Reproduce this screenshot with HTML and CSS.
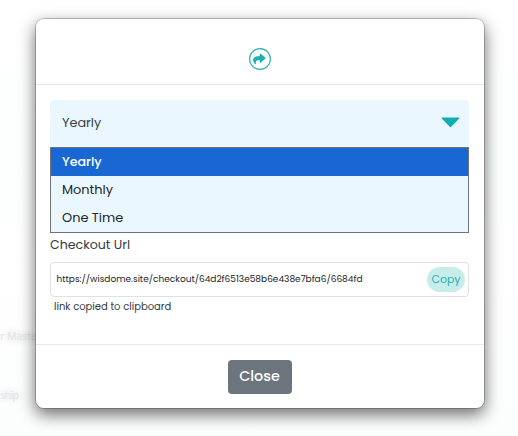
FILE: index.html
```html
<!DOCTYPE html>
<html lang="en">
    <head>
        <meta charset="utf-8">
        <title>Share checkout</title>
        <link rel="stylesheet" href="styles.css">
    </head>
    <body>
        <div class="backdrop">
            <span class="row-name first">r Maste</span>
            <span class="row-name second">ship</span>
        </div>

        <div class="modal">
            <div class="modal-header">
                <svg class="share-icon" width="22" height="22" viewBox="0 0 22 22">
                    <circle cx="11" cy="11" r="10.4" fill="none" stroke="#1fb0b5" stroke-width="1.1"/>
                    <path d="M10.8 5.8 Q11.2 5.4 11.8 5.8 L16.5 9.8 Q16.9 10.2 16.5 10.6 L11.8 14.6 Q11.2 15 10.8 14.4 V12.3 C7.6 12.2 6.3 13 7 15.8 Q6.9 16.3 6.3 16 C4.6 14.8 3.8 12.9 4.2 11.1 C4.8 8.7 7.3 8 10.8 7.9 Z" fill="#1fb0b5"/>
                </svg>
            </div>

            <div class="modal-body">
                <div class="select">
                    <span>Yearly</span>
                    <svg class="arrow" width="19" height="11" viewBox="0 0 19 11">
                        <path d="M0.8 0.5 H18.2 Q18.8 0.8 18.2 1.4 L10 10 Q9.5 10.5 9 10 L0.8 1.4 Q0.2 0.8 0.8 0.5 Z" fill="#12adb3"/>
                    </svg>
                    <ul class="options">
                        <li class="selected">Yearly</li>
                        <li>Monthly</li>
                        <li>One Time</li>
                    </ul>
                </div>

                <label class="url-label">Checkout Url</label>
                <div class="url-box">
                    <span class="url">https://wisdome.site/checkout/64d2f6513e58b6e438e7bfa6/6684fd</span>
                    <button class="copy">Copy</button>
                </div>
                <div class="hint">link copied to clipboard</div>
            </div>

            <div class="modal-footer">
                <button class="close">Close</button>
            </div>
        </div>
    </body>
</html>
```

FILE: styles.css
```css
* {
    box-sizing: border-box;
}

html, body {
    height: 100%;
}

body {
    margin: 0;
    padding: 18px 33px 0 35px;
    overflow: hidden;
    background: linear-gradient(#fff, #fdfefe 40%, #fff 60%, #fcfdfd);
    color: #212529;
    font-family: Poppins, Inter, "Open Sans", sans-serif;
    font-size: 13px;
}

button {
    border: 0;
    font-family: inherit;
}

.backdrop {
    position: absolute;
    inset: 0;
    color: #e2e3e6;
    font-family: "Open Sans", sans-serif;
    font-size: 10.5px;
}

.row-name {
    position: absolute;
    left: 0;
    line-height: 16px;
    text-shadow: 0 0 8px #c0c2ce;
}

.first {
    top: 328px;
}

.second {
    top: 387px;
    letter-spacing: -0.5px;
}

.modal {
    position: relative;
    height: 391px;
    background: #fff;
    border: 1px solid rgba(0, 0, 0, 0.2);
    border-radius: 9px;
    background-clip: padding-box;
    box-shadow: 0 6px 16px rgba(0, 0, 0, 0.55);
}

.modal-header {
    height: 66px;
    padding-top: 29px;
    text-align: center;
    border-bottom: 1px solid #e6e9ec;
}

.share-icon {
    display: block;
    margin: 0 auto;
}

.modal-body {
    height: 259px;
    padding: 15px 15px 0 14px;
}

.select {
    position: relative;
    display: flex;
    align-items: center;
    justify-content: space-between;
    height: 47px;
    padding: 0 9px 2px 12px;
    background: #eaf7ff;
    border-radius: 4px;
    color: #3a4045;
    font-size: 12.8px;
}

.options {
    position: absolute;
    top: 47px;
    left: 0;
    right: 0;
    margin: 0;
    padding: 0;
    list-style: none;
    background: #eaf7ff;
    border: 1px solid #6f7377;
    color: #212529;
    font-size: 12.9px;
}

.options li {
    height: 28px;
    padding-left: 11px;
    line-height: 27px;
}

.options .selected {
    background: #1967d2;
    color: #fff;
    font-size: 12.7px;
    font-weight: 500;
}

.url-label {
    display: block;
    margin-top: 88px;
    font-size: 12.6px;
    line-height: 20px;
    color: #343a40;
}

.url-box {
    display: flex;
    align-items: center;
    justify-content: space-between;
    height: 35px;
    margin-top: 7px;
    padding: 0 3px 0 5.5px;
    border: 1px solid #dee2e6;
    border-radius: 4px;
}

.url {
    font-size: 9px;
    line-height: 14px;
    padding-bottom: 1px;
    white-space: nowrap;
}

.copy {
    width: 38px;
    height: 25px;
    padding: 0 0 1px;
    border-radius: 13px;
    background: #c7ecea;
    color: #1fb0b5;
    font-size: 11px;
}

.hint {
    padding-left: 4px;
    font-size: 10px;
    line-height: 19px;
    color: #343a40;
}

.modal-footer {
    display: flex;
    justify-content: center;
    height: 64px;
    padding-top: 15px;
    border-top: 1px solid #e6e9ec;
}

.close {
    width: 64px;
    height: 34px;
    padding: 0 1px 2px 0;
    border-radius: 4px;
    background: #6c757d;
    color: #fff;
    font-size: 14.4px;
    font-weight: 500;
}
```
